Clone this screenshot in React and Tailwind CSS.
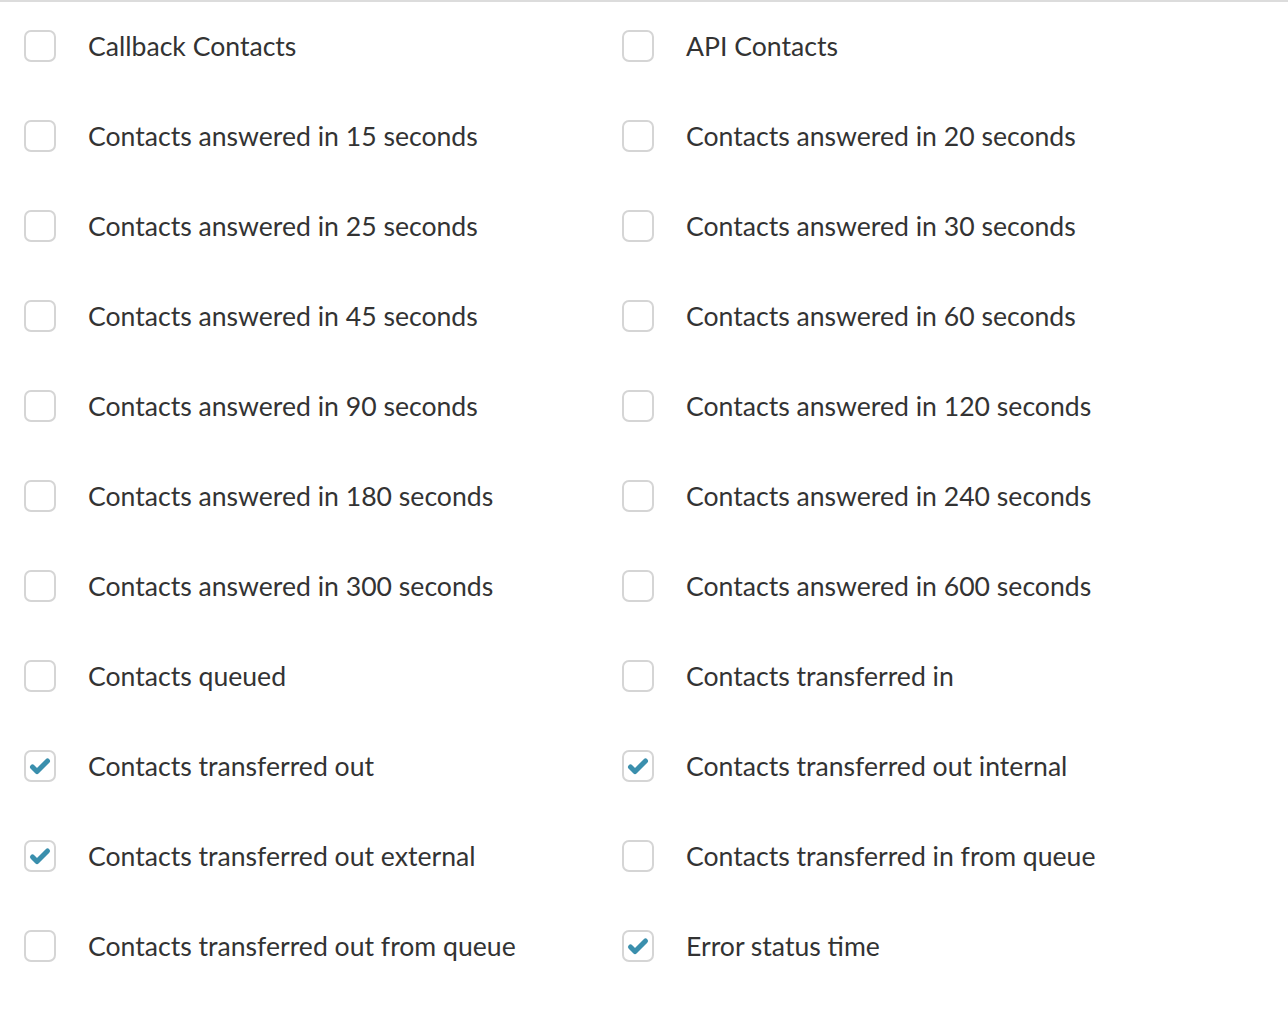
import React from "react";

const items = [
    ["Callback Contacts", false],
    ["API Contacts", false],
    ["Contacts answered in 15 seconds", false],
    ["Contacts answered in 20 seconds", false],
    ["Contacts answered in 25 seconds", false],
    ["Contacts answered in 30 seconds", false],
    ["Contacts answered in 45 seconds", false],
    ["Contacts answered in 60 seconds", false],
    ["Contacts answered in 90 seconds", false],
    ["Contacts answered in 120 seconds", false],
    ["Contacts answered in 180 seconds", false],
    ["Contacts answered in 240 seconds", false],
    ["Contacts answered in 300 seconds", false],
    ["Contacts answered in 600 seconds", false],
    ["Contacts queued", false],
    ["Contacts transferred in", false],
    ["Contacts transferred out", true],
    ["Contacts transferred out internal", true],
    ["Contacts transferred out external", true],
    ["Contacts transferred in from queue", false],
    ["Contacts transferred out from queue", false],
    ["Error status time", true],
];

const Checkbox = ({ checked }) => (
    <div className="w-8 h-8 shrink-0 rounded-[7px] border-2 border-[#d5d5d5] bg-white flex items-center justify-center">
        {checked && (
            <svg viewBox="0 0 24 24" className="w-6 h-6">
                <path d="M4.5 13l4.5 4.5L19.5 7" fill="none" stroke="#3a8fad" strokeWidth="5" strokeLinecap="round" strokeLinejoin="round" />
            </svg>
        )}
    </div>
);

export default function App() {
    return (
        <div className="w-[1288px] h-[1018px] bg-white border-t-2 border-[#dcdcdc]" style={{ fontFamily: "Lato, 'Open Sans', sans-serif" }}>
            <div className="grid grid-cols-[598px_1fr] -mt-px">
                {items.map(([label, checked]) => (
                    <label key={label} className="h-[90px] flex items-center pl-6">
                        <Checkbox checked={checked} />
                        <span className="ml-8 text-[26.6px] text-[#333333] leading-none">{label}</span>
                    </label>
                ))}
            </div>
        </div>
    );
}
